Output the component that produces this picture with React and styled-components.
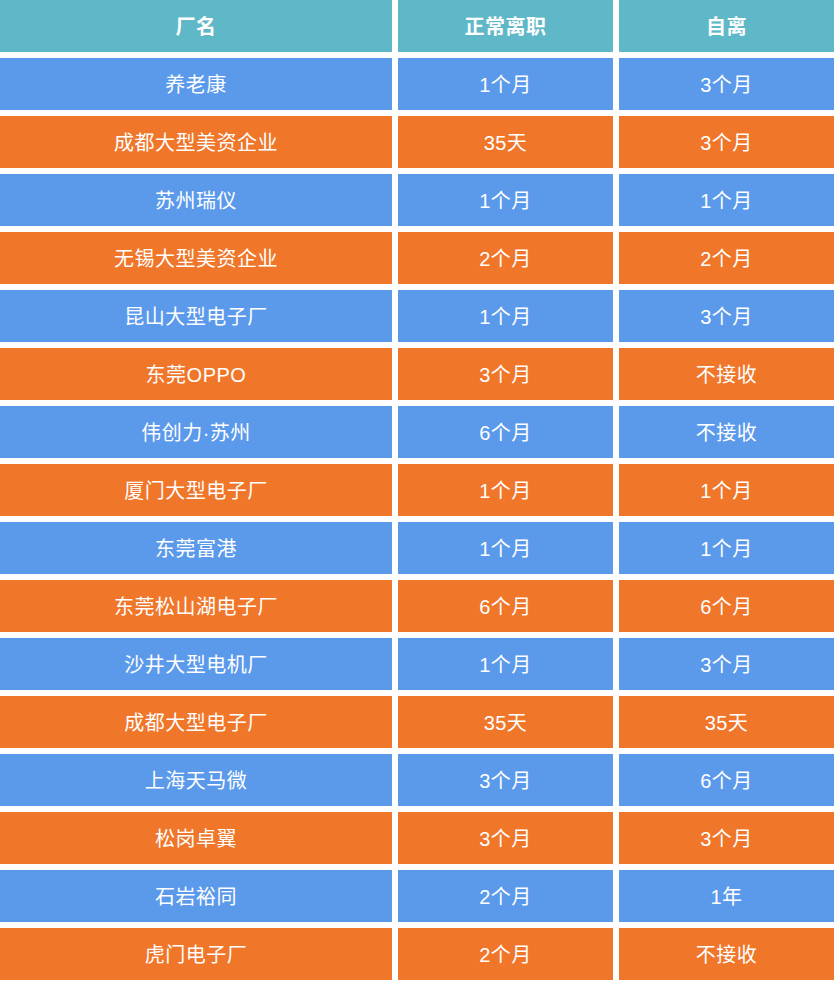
import React from "react";
import styled, { createGlobalStyle } from "styled-components";

const GlobalStyle = createGlobalStyle`
  html, body {
    margin: 0;
    padding: 0;
    background: #fff;
  }
  body {
    font-family: "Liberation Sans", "Noto Sans CJK SC", sans-serif;
  }
`;

const Table = styled.div`
  display: grid;
  grid-template-columns: 392px 215px 215px;
  column-gap: 6px;
  row-gap: 6px;
  width: 834px;
`;

const Cell = styled.div`
  height: 52px;
  box-sizing: border-box;
  padding-bottom: 2px;
  display: flex;
  align-items: center;
  justify-content: center;
  color: #fff;
  font-size: 20px;
  letter-spacing: 0.5px;
  font-weight: ${({ $head }) => ($head ? 700 : 400)};
  background: ${({ $tone }) =>
    $tone === "head" ? "#5fb8c8" : $tone === "blue" ? "#5b9aeb" : "#f0762a"};
`;

const rows = [
  ["养老康", "1个月", "3个月"],
  ["成都大型美资企业", "35天", "3个月"],
  ["苏州瑞仪", "1个月", "1个月"],
  ["无锡大型美资企业", "2个月", "2个月"],
  ["昆山大型电子厂", "1个月", "3个月"],
  ["东莞OPPO", "3个月", "不接收"],
  ["伟创力·苏州", "6个月", "不接收"],
  ["厦门大型电子厂", "1个月", "1个月"],
  ["东莞富港", "1个月", "1个月"],
  ["东莞松山湖电子厂", "6个月", "6个月"],
  ["沙井大型电机厂", "1个月", "3个月"],
  ["成都大型电子厂", "35天", "35天"],
  ["上海天马微", "3个月", "6个月"],
  ["松岗卓翼", "3个月", "3个月"],
  ["石岩裕同", "2个月", "1年"],
  ["虎门电子厂", "2个月", "不接收"],
];

export default function App() {
  return (
    <>
      <GlobalStyle />
      <Table>
        {["厂名", "正常离职", "自离"].map((h) => (
          <Cell key={h} $tone="head" $head>
            {h}
          </Cell>
        ))}
        {rows.map((r, i) =>
          r.map((c, j) => (
            <Cell key={`${i}-${j}`} $tone={i % 2 === 0 ? "blue" : "orange"}>
              {c}
            </Cell>
          ))
        )}
      </Table>
    </>
  );
}
